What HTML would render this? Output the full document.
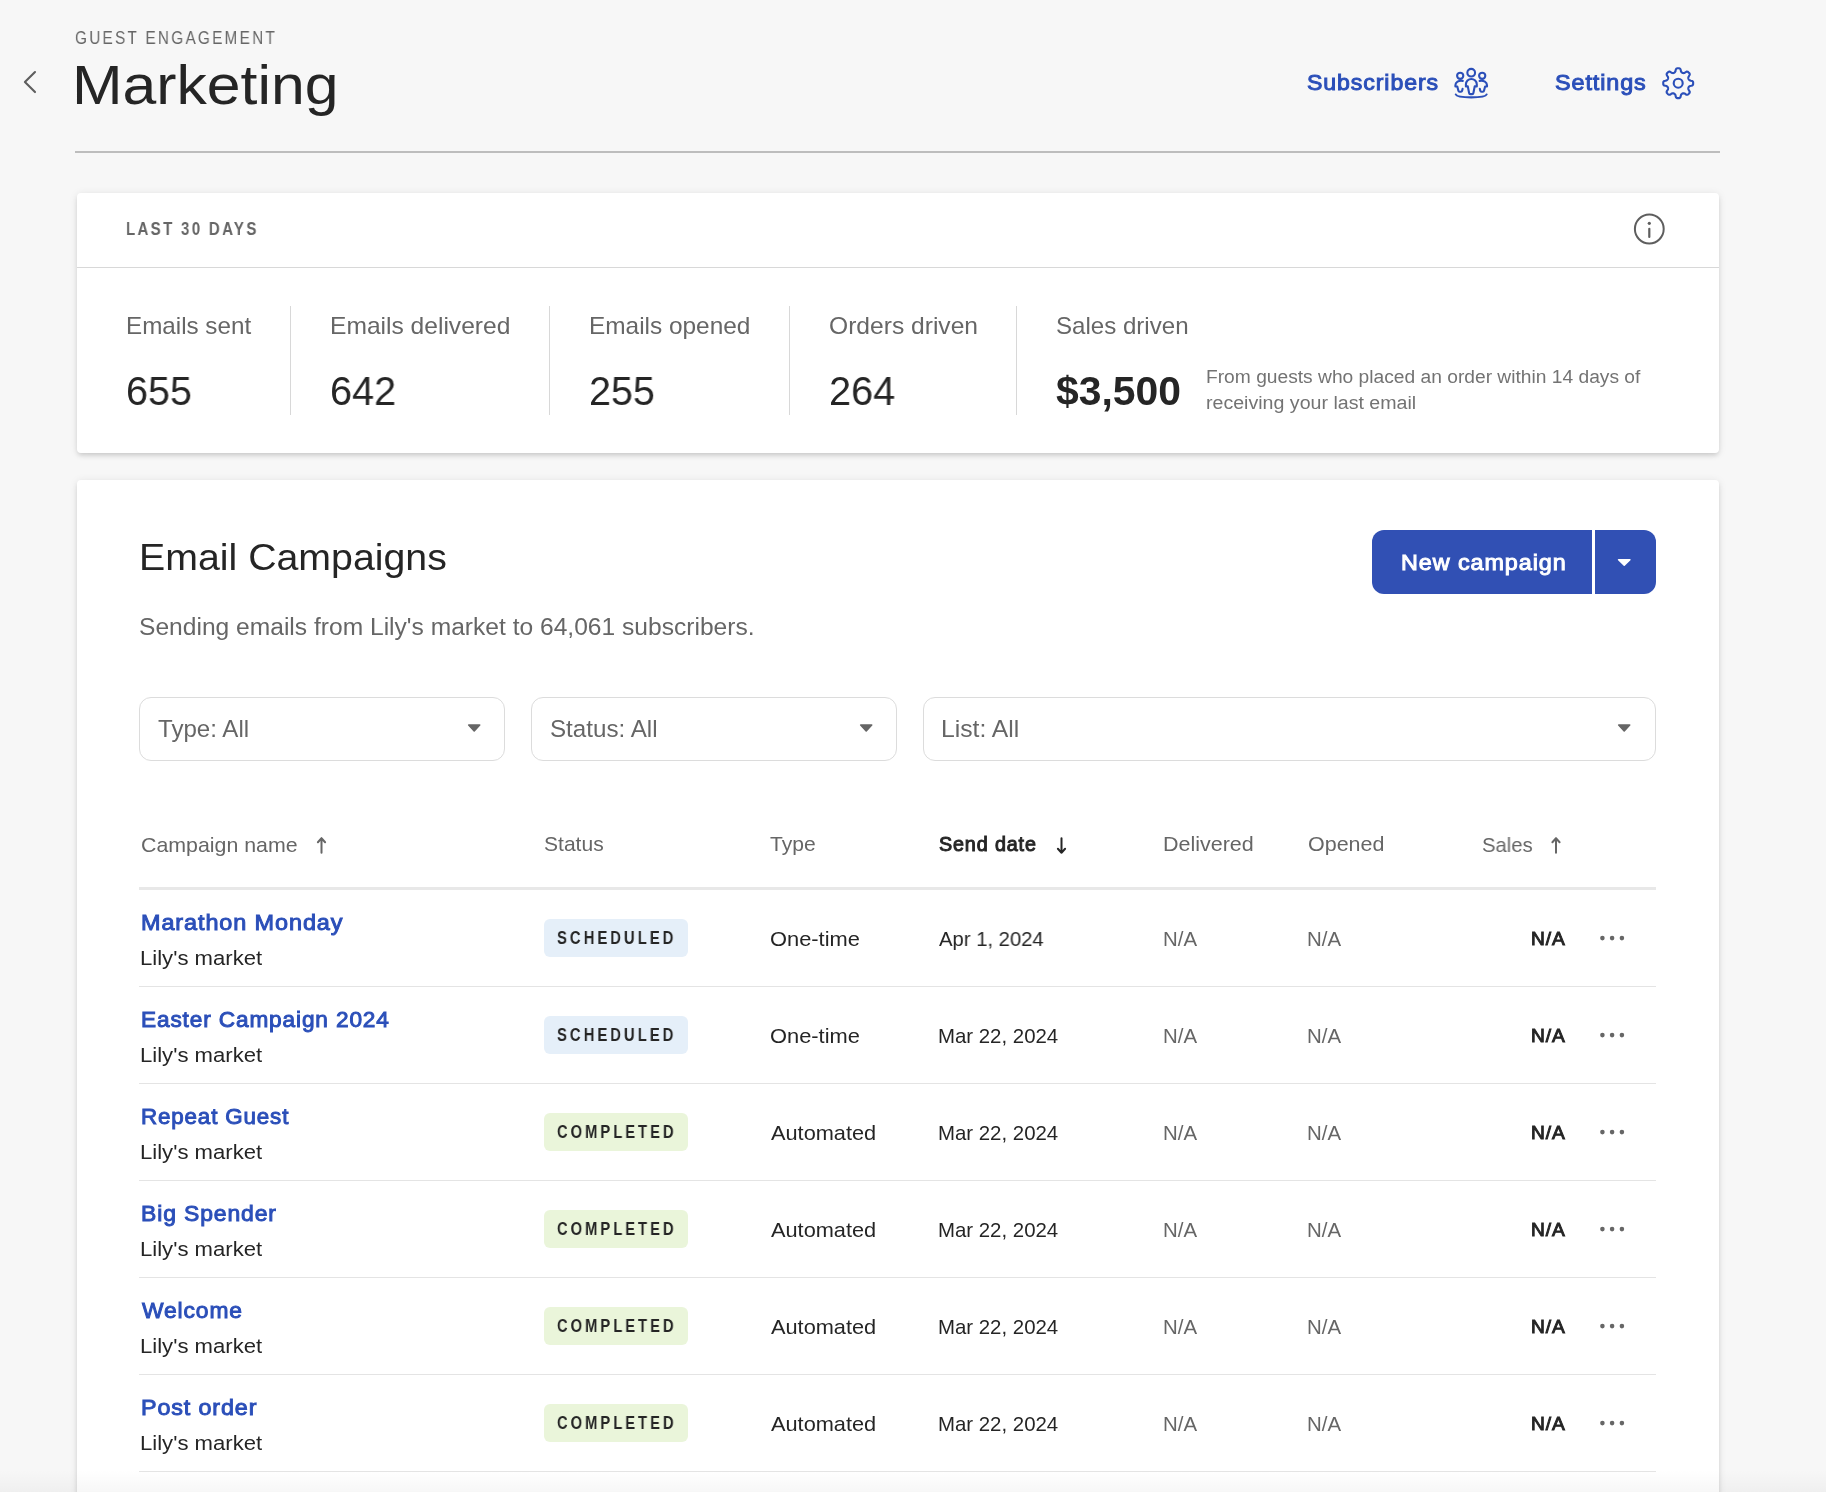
<!DOCTYPE html>
<html lang="en"><head><meta charset="utf-8"><title>Marketing</title>
<style>
html,body{margin:0;padding:0;background:#f7f7f7}
body{width:1826px;height:1492px;overflow:hidden;font-family:"Liberation Sans",sans-serif}
#root{position:relative;width:1826px;height:1492px;overflow:hidden;background:#f7f7f7}
.abs{position:absolute;display:block}
.t{position:absolute;display:block;white-space:nowrap;line-height:1;transform-origin:0 0;will-change:transform}
.card{position:absolute;background:#fff;border-radius:4px;box-shadow:0 3px 5px -1px rgba(0,0,0,.15),0 1px 9px rgba(0,0,0,.085)}
.sel{box-sizing:border-box;border:1px solid #dcdcdc;border-radius:12px;background:#fff}
</style></head><body><div id="root">
<span class="t " style="left:75.23px;top:29.00px;font-size:18.30px;color:#666666;transform:scaleX(0.8388);letter-spacing:2.70px;">GUEST ENGAGEMENT</span>
<span class="t " style="left:72.24px;top:57.00px;font-size:55.80px;color:#252525;transform:scaleX(1.0876);">Marketing</span>
<span class="t " style="left:1307.06px;top:72.00px;font-size:21.80px;color:#2b4fb9;transform:scaleX(1.0606);-webkit-text-stroke:0.95px #2b4fb9;letter-spacing:0.85px;">Subscribers</span>
<span class="t " style="left:1554.66px;top:72.00px;font-size:21.80px;color:#2b4fb9;transform:scaleX(1.0719);-webkit-text-stroke:0.95px #2b4fb9;letter-spacing:0.85px;">Settings</span>
<div class="abs" style="left:75px;top:151px;width:1645px;height:2px;background:#bdbdbd"></div>
<div class="card" style="left:77px;top:193px;width:1642px;height:260px"></div>
<div class="abs" style="left:77px;top:267px;width:1642px;height:1px;background:#d8d8d8"></div>
<span class="t " style="left:126.32px;top:220.00px;font-size:18.40px;color:#666666;transform:scaleX(0.8200);font-weight:700;letter-spacing:2.80px;">LAST 30 DAYS</span>
<div class="abs" style="left:290px;top:306px;width:1px;height:109px;background:#d8d8d8"></div>
<div class="abs" style="left:549px;top:306px;width:1px;height:109px;background:#d8d8d8"></div>
<div class="abs" style="left:789px;top:306px;width:1px;height:109px;background:#d8d8d8"></div>
<div class="abs" style="left:1016px;top:306px;width:1px;height:109px;background:#d8d8d8"></div>
<span class="t " style="left:126.16px;top:314.00px;font-size:24.00px;color:#666666;transform:scaleX(1.0086);">Emails sent</span>
<span class="t " style="left:126.37px;top:371.00px;font-size:40.00px;color:#252525;transform:scaleX(0.9882);">655</span>
<span class="t " style="left:330.33px;top:314.00px;font-size:24.00px;color:#666666;transform:scaleX(1.0244);">Emails delivered</span>
<span class="t " style="left:330.12px;top:371.00px;font-size:40.00px;color:#252525;transform:scaleX(0.9906);">642</span>
<span class="t " style="left:589.45px;top:314.00px;font-size:24.00px;color:#666666;transform:scaleX(1.0162);">Emails opened</span>
<span class="t " style="left:588.93px;top:371.00px;font-size:40.00px;color:#252525;transform:scaleX(0.9874);">255</span>
<span class="t " style="left:829.29px;top:314.00px;font-size:24.00px;color:#666666;transform:scaleX(1.0250);">Orders driven</span>
<span class="t " style="left:828.92px;top:371.00px;font-size:40.00px;color:#252525;transform:scaleX(0.9923);">264</span>
<span class="t " style="left:1056.22px;top:314.00px;font-size:24.00px;color:#666666;transform:scaleX(1.0037);">Sales driven</span>
<span class="t " style="left:1056.09px;top:371.00px;font-size:40.00px;color:#252525;transform:scaleX(1.0216);font-weight:700;">$3,500</span>
<span class="t " style="left:1205.96px;top:368.00px;font-size:18.00px;color:#737373;transform:scaleX(1.0667);">From guests who placed an order within 14 days of</span>
<span class="t " style="left:1206.23px;top:394.00px;font-size:18.00px;color:#737373;transform:scaleX(1.0886);">receiving your last email</span>
<div class="card" style="left:77px;top:480px;width:1642px;height:1100px"></div>
<span class="t " style="left:138.51px;top:539.00px;font-size:37.80px;color:#252525;transform:scaleX(1.0393);">Email Campaigns</span>
<span class="t " style="left:138.89px;top:616.00px;font-size:23.50px;color:#666666;transform:scaleX(1.0463);">Sending emails from Lily&#x27;s market to 64,061 subscribers.</span>
<div class="abs" style="left:1372px;top:530px;width:220px;height:64px;background:#3150b4;border-radius:12px 0 0 12px"></div>
<div class="abs" style="left:1595px;top:530px;width:61px;height:64px;background:#3150b4;border-radius:0 12px 12px 0"></div>
<span class="t " style="left:1400.65px;top:553.00px;font-size:21.40px;color:#ffffff;transform:scaleX(1.0922);-webkit-text-stroke:0.95px #ffffff;letter-spacing:0.85px;">New campaign</span>
<div class="abs sel" style="left:139px;top:697px;width:366px;height:64px"></div>
<span class="t " style="left:158.32px;top:718.00px;font-size:23.70px;color:#666666;transform:scaleX(1.0175);">Type: All</span>
<div class="abs sel" style="left:531px;top:697px;width:366px;height:64px"></div>
<span class="t " style="left:550.01px;top:718.00px;font-size:23.70px;color:#666666;transform:scaleX(1.0206);">Status: All</span>
<div class="abs sel" style="left:923px;top:697px;width:733px;height:64px"></div>
<span class="t " style="left:941.12px;top:718.00px;font-size:23.70px;color:#666666;transform:scaleX(1.0436);">List: All</span>
<span class="t " style="left:140.53px;top:835.00px;font-size:20.70px;color:#666666;transform:scaleX(1.0314);">Campaign name</span>
<span class="t " style="left:544.25px;top:834.00px;font-size:20.70px;color:#666666;transform:scaleX(1.0170);">Status</span>
<span class="t " style="left:770.38px;top:834.00px;font-size:20.70px;color:#666666;transform:scaleX(1.0181);">Type</span>
<span class="t " style="left:939.00px;top:835.00px;font-size:19.30px;color:#252525;transform:scaleX(1.0231);-webkit-text-stroke:0.95px #252525;letter-spacing:0.85px;">Send date</span>
<span class="t " style="left:1162.68px;top:834.00px;font-size:20.70px;color:#666666;transform:scaleX(1.0388);">Delivered</span>
<span class="t " style="left:1307.63px;top:834.00px;font-size:20.70px;color:#666666;transform:scaleX(1.0383);">Opened</span>
<span class="t " style="left:1481.69px;top:835.00px;font-size:20.70px;color:#666666;transform:scaleX(0.9776);">Sales</span>
<div class="abs" style="left:139px;top:887px;width:1517px;height:3px;background:#e8e8e8"></div>
<span class="t " style="left:140.73px;top:912.00px;font-size:22.20px;color:#2b4fb9;transform:scaleX(1.0564);-webkit-text-stroke:0.95px #2b4fb9;letter-spacing:0.85px;">Marathon Monday</span>
<span class="t " style="left:140.13px;top:948.00px;font-size:20.50px;color:#252525;transform:scaleX(1.0782);">Lily&#x27;s market</span>
<div class="abs" style="left:544px;top:919px;width:144px;height:38px;background:#e5eff9;border-radius:6px"></div>
<span class="t " style="left:556.93px;top:930.00px;font-size:17.60px;color:#252525;transform:scaleX(0.8417);font-weight:700;letter-spacing:3.60px;">SCHEDULED</span>
<span class="t " style="left:769.92px;top:929.00px;font-size:20.40px;color:#252525;transform:scaleX(1.0726);">One-time</span>
<span class="t " style="left:938.60px;top:929.00px;font-size:20.40px;color:#252525;transform:scaleX(0.9929);">Apr 1, 2024</span>
<span class="t " style="left:1162.88px;top:929.00px;font-size:20.40px;color:#666666;transform:scaleX(0.9896);">N/A</span>
<span class="t " style="left:1307.46px;top:929.00px;font-size:20.40px;color:#666666;transform:scaleX(1.0020);">N/A</span>
<span class="t " style="left:1531.04px;top:929.00px;font-size:19.00px;color:#252525;transform:scaleX(1.0100);-webkit-text-stroke:0.95px #252525;letter-spacing:0.85px;">N/A</span>
<div class="abs" style="left:139px;top:986px;width:1517px;height:1px;background:#e4e4e4"></div>
<span class="t " style="left:140.77px;top:1009.00px;font-size:22.20px;color:#2b4fb9;transform:scaleX(1.0198);-webkit-text-stroke:0.95px #2b4fb9;letter-spacing:0.85px;">Easter Campaign 2024</span>
<span class="t " style="left:140.13px;top:1045.00px;font-size:20.50px;color:#252525;transform:scaleX(1.0782);">Lily&#x27;s market</span>
<div class="abs" style="left:544px;top:1016px;width:144px;height:38px;background:#e5eff9;border-radius:6px"></div>
<span class="t " style="left:556.93px;top:1027.00px;font-size:17.60px;color:#252525;transform:scaleX(0.8417);font-weight:700;letter-spacing:3.60px;">SCHEDULED</span>
<span class="t " style="left:769.92px;top:1026.00px;font-size:20.40px;color:#252525;transform:scaleX(1.0726);">One-time</span>
<span class="t " style="left:937.67px;top:1026.00px;font-size:20.40px;color:#252525;transform:scaleX(0.9996);">Mar 22, 2024</span>
<span class="t " style="left:1162.88px;top:1026.00px;font-size:20.40px;color:#666666;transform:scaleX(0.9896);">N/A</span>
<span class="t " style="left:1307.46px;top:1026.00px;font-size:20.40px;color:#666666;transform:scaleX(1.0020);">N/A</span>
<span class="t " style="left:1531.04px;top:1026.00px;font-size:19.00px;color:#252525;transform:scaleX(1.0100);-webkit-text-stroke:0.95px #252525;letter-spacing:0.85px;">N/A</span>
<div class="abs" style="left:139px;top:1083px;width:1517px;height:1px;background:#e4e4e4"></div>
<span class="t " style="left:140.79px;top:1106.00px;font-size:22.20px;color:#2b4fb9;transform:scaleX(1.0076);-webkit-text-stroke:0.95px #2b4fb9;letter-spacing:0.85px;">Repeat Guest</span>
<span class="t " style="left:140.13px;top:1142.00px;font-size:20.50px;color:#252525;transform:scaleX(1.0782);">Lily&#x27;s market</span>
<div class="abs" style="left:544px;top:1113px;width:144px;height:38px;background:#eaf5da;border-radius:6px"></div>
<span class="t " style="left:556.71px;top:1124.00px;font-size:17.60px;color:#252525;transform:scaleX(0.8374);font-weight:700;letter-spacing:3.60px;">COMPLETED</span>
<span class="t " style="left:770.90px;top:1123.00px;font-size:20.40px;color:#252525;transform:scaleX(1.0666);">Automated</span>
<span class="t " style="left:937.67px;top:1123.00px;font-size:20.40px;color:#252525;transform:scaleX(0.9996);">Mar 22, 2024</span>
<span class="t " style="left:1162.88px;top:1123.00px;font-size:20.40px;color:#666666;transform:scaleX(0.9896);">N/A</span>
<span class="t " style="left:1307.46px;top:1123.00px;font-size:20.40px;color:#666666;transform:scaleX(1.0020);">N/A</span>
<span class="t " style="left:1531.04px;top:1123.00px;font-size:19.00px;color:#252525;transform:scaleX(1.0100);-webkit-text-stroke:0.95px #252525;letter-spacing:0.85px;">N/A</span>
<div class="abs" style="left:139px;top:1180px;width:1517px;height:1px;background:#e4e4e4"></div>
<span class="t " style="left:140.76px;top:1203.00px;font-size:22.20px;color:#2b4fb9;transform:scaleX(1.0330);-webkit-text-stroke:0.95px #2b4fb9;letter-spacing:0.85px;">Big Spender</span>
<span class="t " style="left:140.13px;top:1239.00px;font-size:20.50px;color:#252525;transform:scaleX(1.0782);">Lily&#x27;s market</span>
<div class="abs" style="left:544px;top:1210px;width:144px;height:38px;background:#eaf5da;border-radius:6px"></div>
<span class="t " style="left:556.71px;top:1221.00px;font-size:17.60px;color:#252525;transform:scaleX(0.8374);font-weight:700;letter-spacing:3.60px;">COMPLETED</span>
<span class="t " style="left:770.90px;top:1220.00px;font-size:20.40px;color:#252525;transform:scaleX(1.0666);">Automated</span>
<span class="t " style="left:937.67px;top:1220.00px;font-size:20.40px;color:#252525;transform:scaleX(0.9996);">Mar 22, 2024</span>
<span class="t " style="left:1162.88px;top:1220.00px;font-size:20.40px;color:#666666;transform:scaleX(0.9896);">N/A</span>
<span class="t " style="left:1307.46px;top:1220.00px;font-size:20.40px;color:#666666;transform:scaleX(1.0020);">N/A</span>
<span class="t " style="left:1531.04px;top:1220.00px;font-size:19.00px;color:#252525;transform:scaleX(1.0100);-webkit-text-stroke:0.95px #252525;letter-spacing:0.85px;">N/A</span>
<div class="abs" style="left:139px;top:1277px;width:1517px;height:1px;background:#e4e4e4"></div>
<span class="t " style="left:142.09px;top:1300.00px;font-size:22.20px;color:#2b4fb9;transform:scaleX(1.0288);-webkit-text-stroke:0.95px #2b4fb9;letter-spacing:0.85px;">Welcome</span>
<span class="t " style="left:140.13px;top:1336.00px;font-size:20.50px;color:#252525;transform:scaleX(1.0782);">Lily&#x27;s market</span>
<div class="abs" style="left:544px;top:1307px;width:144px;height:38px;background:#eaf5da;border-radius:6px"></div>
<span class="t " style="left:556.71px;top:1318.00px;font-size:17.60px;color:#252525;transform:scaleX(0.8374);font-weight:700;letter-spacing:3.60px;">COMPLETED</span>
<span class="t " style="left:770.90px;top:1317.00px;font-size:20.40px;color:#252525;transform:scaleX(1.0666);">Automated</span>
<span class="t " style="left:937.67px;top:1317.00px;font-size:20.40px;color:#252525;transform:scaleX(0.9996);">Mar 22, 2024</span>
<span class="t " style="left:1162.88px;top:1317.00px;font-size:20.40px;color:#666666;transform:scaleX(0.9896);">N/A</span>
<span class="t " style="left:1307.46px;top:1317.00px;font-size:20.40px;color:#666666;transform:scaleX(1.0020);">N/A</span>
<span class="t " style="left:1531.04px;top:1317.00px;font-size:19.00px;color:#252525;transform:scaleX(1.0100);-webkit-text-stroke:0.95px #252525;letter-spacing:0.85px;">N/A</span>
<div class="abs" style="left:139px;top:1374px;width:1517px;height:1px;background:#e4e4e4"></div>
<span class="t " style="left:140.73px;top:1397.00px;font-size:22.20px;color:#2b4fb9;transform:scaleX(1.0496);-webkit-text-stroke:0.95px #2b4fb9;letter-spacing:0.85px;">Post order</span>
<span class="t " style="left:140.13px;top:1433.00px;font-size:20.50px;color:#252525;transform:scaleX(1.0782);">Lily&#x27;s market</span>
<div class="abs" style="left:544px;top:1404px;width:144px;height:38px;background:#eaf5da;border-radius:6px"></div>
<span class="t " style="left:556.71px;top:1415.00px;font-size:17.60px;color:#252525;transform:scaleX(0.8374);font-weight:700;letter-spacing:3.60px;">COMPLETED</span>
<span class="t " style="left:770.90px;top:1414.00px;font-size:20.40px;color:#252525;transform:scaleX(1.0666);">Automated</span>
<span class="t " style="left:937.67px;top:1414.00px;font-size:20.40px;color:#252525;transform:scaleX(0.9996);">Mar 22, 2024</span>
<span class="t " style="left:1162.88px;top:1414.00px;font-size:20.40px;color:#666666;transform:scaleX(0.9896);">N/A</span>
<span class="t " style="left:1307.46px;top:1414.00px;font-size:20.40px;color:#666666;transform:scaleX(1.0020);">N/A</span>
<span class="t " style="left:1531.04px;top:1414.00px;font-size:19.00px;color:#252525;transform:scaleX(1.0100);-webkit-text-stroke:0.95px #252525;letter-spacing:0.85px;">N/A</span>
<div class="abs" style="left:139px;top:1471px;width:1517px;height:1px;background:#e4e4e4"></div>
<div class="abs" style="left:0;top:1470px;width:1826px;height:22px;background:linear-gradient(to bottom,rgba(0,0,0,0),rgba(0,0,0,0.03))"></div>
<svg class="abs" style="left:0;top:0" width="1826" height="1492" viewBox="0 0 1826 1492"><path d="M35.0 72.1 L24.9 82.1 L35.0 92.1" fill="none" stroke="#5e5e5e" stroke-width="2.1" stroke-linecap="round" stroke-linejoin="round"/><circle cx="1649.3" cy="229" r="14.4" fill="none" stroke="#5e5e5e" stroke-width="2"/><circle cx="1649.3" cy="223.3" r="1.6" fill="#5e5e5e"/><path d="M1649.3 228.8 V236.9" stroke="#5e5e5e" stroke-width="2.2" stroke-linecap="round" fill="none"/><path d="M1618.6 559.7 H1629.9 L1624.25 565.1 Z" fill="#fff" stroke="#fff" stroke-width="1.6" stroke-linejoin="round"/><path d="M468.7 725.0 H479.7 L474.2 731.0 Z" fill="#666" stroke="#666" stroke-width="1.6" stroke-linejoin="round"/><path d="M860.7 725.0 H871.7 L866.2 731.0 Z" fill="#666" stroke="#666" stroke-width="1.6" stroke-linejoin="round"/><path d="M1618.7 725.0 H1629.7 L1624.2 731.0 Z" fill="#666" stroke="#666" stroke-width="1.6" stroke-linejoin="round"/><path d="M321.5 838.3 V852.7 M317.9 842.1999999999999 L321.5 838.3 L325.1 842.1999999999999" fill="none" stroke="#666666" stroke-width="2" stroke-linecap="round" stroke-linejoin="round"/><path d="M1061.5 838.3 V852.7 M1057.9 848.8000000000001 L1061.5 852.7 L1065.1 848.8000000000001" fill="none" stroke="#252525" stroke-width="2" stroke-linecap="round" stroke-linejoin="round"/><path d="M1556.0 838.3 V852.7 M1552.4 842.1999999999999 L1556.0 838.3 L1559.6 842.1999999999999" fill="none" stroke="#666666" stroke-width="2" stroke-linecap="round" stroke-linejoin="round"/><circle cx="1602.4" cy="938.1" r="2.3" fill="#666"/><circle cx="1612.1" cy="938.1" r="2.3" fill="#666"/><circle cx="1621.9" cy="938.1" r="2.3" fill="#666"/><circle cx="1602.4" cy="1035.1" r="2.3" fill="#666"/><circle cx="1612.1" cy="1035.1" r="2.3" fill="#666"/><circle cx="1621.9" cy="1035.1" r="2.3" fill="#666"/><circle cx="1602.4" cy="1132.1" r="2.3" fill="#666"/><circle cx="1612.1" cy="1132.1" r="2.3" fill="#666"/><circle cx="1621.9" cy="1132.1" r="2.3" fill="#666"/><circle cx="1602.4" cy="1229.1" r="2.3" fill="#666"/><circle cx="1612.1" cy="1229.1" r="2.3" fill="#666"/><circle cx="1621.9" cy="1229.1" r="2.3" fill="#666"/><circle cx="1602.4" cy="1326.1" r="2.3" fill="#666"/><circle cx="1612.1" cy="1326.1" r="2.3" fill="#666"/><circle cx="1621.9" cy="1326.1" r="2.3" fill="#666"/><circle cx="1602.4" cy="1423.1" r="2.3" fill="#666"/><circle cx="1612.1" cy="1423.1" r="2.3" fill="#666"/><circle cx="1621.9" cy="1423.1" r="2.3" fill="#666"/></svg>
<svg class="abs" style="left:0;top:0" width="1826" height="130" viewBox="0 0 1826 130" fill="none" stroke="#2b4fb9" stroke-width="2.1" stroke-linecap="round" stroke-linejoin="round">
<circle cx="1471.2" cy="72.7" r="3.85"/>
<path d="M1465.9,86.4 V84.4 a5.45,5.45 0 0 1 10.9,0 V86.4 H1474.7 L1473.4,93 Q1473.2,94.1 1472.2,94.1 H1470.3 Q1469.3,94.1 1469.1,93 L1467.8,86.4 Z"/>
<circle cx="1460.2" cy="75.8" r="3.1"/>
<path d="M1462.8,80.9 C1458.5,80.2 1455.4,82.2 1455.4,85.2 V86.5 H1457.3 L1458.4,90.8 Q1458.6,91.7 1459.5,91.7 H1461 Q1461.9,91.7 1462.1,90.8 L1462.6,88.7"/>
<circle cx="1482.2" cy="75.8" r="3.1"/>
<path d="M1479.6,80.9 C1483.9,80.2 1487,82.2 1487,85.2 V86.5 H1485.1 L1484,90.8 Q1483.8,91.7 1482.9,91.7 H1481.4 Q1480.5,91.7 1480.3,90.8 L1479.8,88.7"/>
<path d="M1455.8,94.5 C1457.2,98.3 1485.2,98.3 1486.6,94.5"/>
<path d="M1693.15,83.20 L1693.14,83.79 L1693.10,84.37 L1692.79,84.93 L1692.28,85.43 L1691.18,85.78 L1689.90,86.01 L1689.38,86.35 L1689.00,86.71 L1688.71,87.08 L1688.50,87.47 L1688.37,87.89 L1688.31,88.35 L1688.34,88.88 L1688.46,89.49 L1689.01,90.42 L1689.73,91.58 L1689.74,92.29 L1689.57,92.91 L1689.18,93.35 L1688.77,93.77 L1688.35,94.18 L1687.91,94.57 L1687.29,94.74 L1686.58,94.73 L1685.55,94.20 L1684.49,93.46 L1683.88,93.34 L1683.35,93.31 L1682.89,93.37 L1682.47,93.50 L1682.08,93.71 L1681.71,94.00 L1681.35,94.38 L1681.01,94.90 L1680.74,95.95 L1680.43,97.28 L1679.93,97.79 L1679.37,98.10 L1678.79,98.14 L1678.20,98.15 L1677.61,98.14 L1677.03,98.10 L1676.47,97.79 L1675.97,97.28 L1675.62,96.18 L1675.39,94.90 L1675.05,94.38 L1674.69,94.00 L1674.32,93.71 L1673.93,93.50 L1673.51,93.37 L1673.05,93.31 L1672.52,93.34 L1671.91,93.46 L1670.85,94.20 L1669.82,94.73 L1669.11,94.74 L1668.49,94.57 L1668.05,94.18 L1667.63,93.77 L1667.22,93.35 L1666.83,92.91 L1666.66,92.29 L1666.67,91.58 L1667.20,90.55 L1667.94,89.49 L1668.06,88.88 L1668.09,88.35 L1668.03,87.89 L1667.90,87.47 L1667.69,87.08 L1667.40,86.71 L1667.02,86.35 L1666.50,86.01 L1665.45,85.74 L1664.12,85.43 L1663.61,84.93 L1663.30,84.37 L1663.26,83.79 L1663.25,83.20 L1663.26,82.61 L1663.30,82.03 L1663.61,81.47 L1664.12,80.97 L1665.45,80.66 L1666.50,80.39 L1667.02,80.05 L1667.40,79.69 L1667.69,79.32 L1667.90,78.93 L1668.03,78.51 L1668.09,78.05 L1668.06,77.52 L1667.94,76.91 L1667.20,75.85 L1666.67,74.82 L1666.66,74.11 L1666.83,73.49 L1667.22,73.05 L1667.63,72.63 L1668.05,72.22 L1668.49,71.83 L1669.11,71.66 L1669.82,71.67 L1670.98,72.39 L1671.91,72.94 L1672.52,73.06 L1673.05,73.09 L1673.51,73.03 L1673.93,72.90 L1674.32,72.69 L1674.69,72.40 L1675.05,72.02 L1675.39,71.50 L1675.62,70.22 L1675.97,69.12 L1676.47,68.61 L1677.03,68.30 L1677.61,68.26 L1678.20,68.25 L1678.79,68.26 L1679.37,68.30 L1679.93,68.61 L1680.43,69.12 L1680.78,70.22 L1681.01,71.50 L1681.35,72.02 L1681.71,72.40 L1682.08,72.69 L1682.47,72.90 L1682.89,73.03 L1683.35,73.09 L1683.88,73.06 L1684.49,72.94 L1685.42,72.39 L1686.58,71.67 L1687.29,71.66 L1687.91,71.83 L1688.35,72.22 L1688.77,72.63 L1689.18,73.05 L1689.57,73.49 L1689.74,74.11 L1689.73,74.82 L1689.01,75.98 L1688.46,76.91 L1688.34,77.52 L1688.31,78.05 L1688.37,78.51 L1688.50,78.93 L1688.71,79.32 L1689.00,79.69 L1689.38,80.05 L1689.90,80.39 L1690.95,80.66 L1692.28,80.97 L1692.79,81.47 L1693.10,82.03 L1693.14,82.61 Z"/><circle cx="1678.2" cy="83.2" r="4.5"/></svg>
</div></body></html>
